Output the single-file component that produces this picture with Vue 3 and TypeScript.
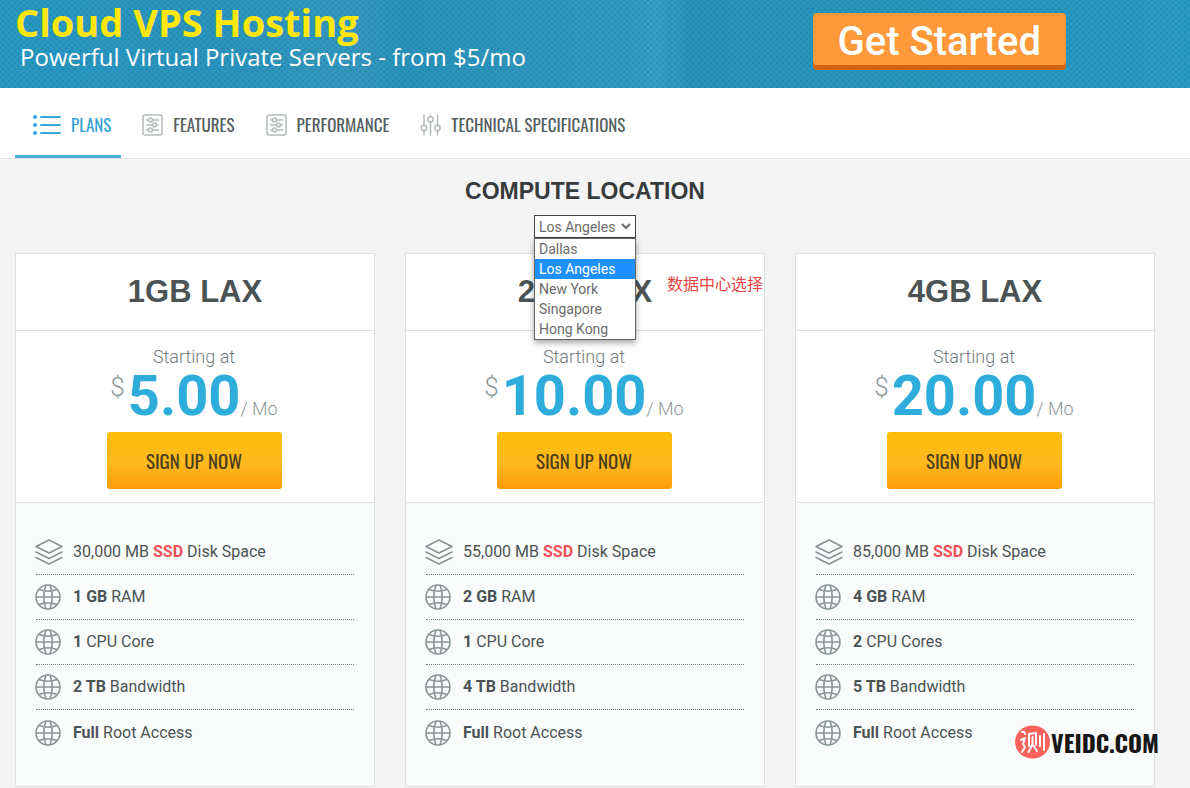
<script setup lang="ts">
import { ref } from 'vue'

interface Plan {
  name: string
  price: string
  disk: string
  features: { strong: string; text: string }[]
}

const makePlan = (name: string, price: string, disk: string, ram: string, cpu: string, cpuText: string, bw: string): Plan => ({
  name,
  price,
  disk,
  features: [
    { strong: ram, text: 'RAM' },
    { strong: cpu, text: cpuText },
    { strong: bw, text: 'Bandwidth' },
    { strong: 'Full', text: 'Root Access' },
  ],
})

const plans: Plan[] = [
  makePlan('1GB LAX', '5.00', '30,000', '1 GB', '1', 'CPU Core', '2 TB'),
  makePlan('2GB LAX', '10.00', '55,000', '2 GB', '1', 'CPU Core', '4 TB'),
  makePlan('4GB LAX', '20.00', '85,000', '4 GB', '2', 'CPU Cores', '5 TB'),
]

const tabs = [
  { label: 'Plans', icon: 'list' },
  { label: 'Features', icon: 'panel' },
  { label: 'Performance', icon: 'panel' },
  { label: 'Technical Specifications', icon: 'sliders' },
]

const locations = ['Dallas', 'Los Angeles', 'New York', 'Singapore', 'Hong Kong']
const location = ref('Los Angeles')
</script>

<template>
  <div class="page">
    <header class="banner">
      <div class="banner-text">
        <h1>Cloud VPS Hosting</h1>
        <p>Powerful Virtual Private Servers - from $5/mo</p>
      </div>
      <button class="get-started" type="button">Get Started</button>
    </header>

    <nav class="tabs">
      <a v-for="(tab, i) in tabs" :key="tab.label" href="#" class="tab" :class="{ active: i === 0 }">
        <svg v-if="tab.icon === 'list'" class="icon-list" width="28" height="20" viewBox="0 0 28 20" fill="none" stroke="currentColor" stroke-width="2" stroke-linecap="round">
          <path d="M8 2h19M8 10h19M8 18h19" />
          <g fill="currentColor" stroke="none"><circle cx="2" cy="2" r="2" /><circle cx="2" cy="10" r="2" /><circle cx="2" cy="18" r="2" /></g>
        </svg>
        <svg v-else-if="tab.icon === 'panel'" width="21" height="22" viewBox="0 0 21 22" fill="none" stroke="currentColor" stroke-width="1.5">
          <rect x="1" y="1" width="19" height="20" rx="2" />
          <path d="M4 6h2.5M10.500 6H17M4 11h6.500M14.500 11H17M4 16h2.500M10.500 16H17" />
          <circle cx="8.500" cy="6" r="1.900" /><circle cx="12.500" cy="11" r="1.900" /><circle cx="8.500" cy="16" r="1.900" />
        </svg>
        <svg v-else width="21" height="22" viewBox="0 0 21 22" fill="none" stroke="currentColor" stroke-width="1.500" stroke-linecap="round">
          <path d="M4 1v10M4 17v4M10.500 1v1.500M10.500 8.500V21M17.500 1v10M17.500 17v4" />
          <circle cx="4" cy="14" r="2.700" /><circle cx="10.500" cy="5.500" r="2.700" /><circle cx="17.500" cy="14" r="2.700" />
        </svg>
        <span>{{ tab.label }}</span>
      </a>
    </nav>

    <main>
      <section class="location">
        <h2><label for="location">Compute Location</label></h2>
        <div class="picker">
          <select id="location" v-model="location">
            <option v-for="l in locations" :key="l">{{ l }}</option>
          </select>
          <svg class="chevron" width="10" height="7" viewBox="0 0 10 7" fill="none" stroke="currentColor" stroke-width="2"><path d="M1 1l4 4 4-4" /></svg>
          <ul class="menu" role="listbox" aria-label="Compute Location">
            <li v-for="l in locations" :key="l" role="option" :aria-selected="l === location" :class="{ selected: l === location }" @click="location = l">{{ l }}</li>
          </ul>
        </div>
      </section>

      <section class="plans">
        <article v-for="(plan, i) in plans" :key="plan.name" class="card">
          <h3>{{ plan.name }}</h3>
          <span v-if="i === 1" class="note">数据中心选择</span>
          <div class="pricing">
            <p class="starting">Starting at</p>
            <p class="price"><span class="currency">$</span><strong>{{ plan.price }}</strong><span class="period">/ Mo</span></p>
            <button type="button" class="signup">SIGN UP NOW</button>
          </div>
          <ul class="features">
            <li>
              <svg width="28" height="26" viewBox="0 0 28 26" fill="none" stroke="currentColor" stroke-width="1.600" stroke-linejoin="round" stroke-linecap="round">
                <path d="M14 1l13 6.500L14 14 1 7.500zM1 13l13 6.500L27 13M1 18.500L14 25l13-6.500" />
              </svg>
              <span>{{ plan.disk }} MB <b class="ssd">SSD</b> Disk Space</span>
            </li>
            <li v-for="f in plan.features" :key="f.text">
              <svg width="28" height="26" viewBox="0 0 28 26" fill="none" stroke="currentColor" stroke-width="1.600">
                <circle cx="13" cy="13" r="12" />
                <path d="M1 13h24M4 5.500q9 3.500 18 0M4 20.500q9-3.500 18 0M11 1q-4.500 12 0 24M15 1q4.500 12 0 24" />
              </svg>
              <span><b>{{ f.strong }}</b> {{ f.text }}</span>
            </li>
          </ul>
          <div v-if="i === 2" class="watermark">
            <svg width="35" height="34" viewBox="0 0 35 34" fill="none" stroke="#fff" stroke-width="2" stroke-linecap="round" stroke-linejoin="round">
              <ellipse cx="17.500" cy="17" rx="17.500" ry="16.500" fill="#fb625c" stroke="none" />
              <path d="M7 7q3-1 3 2M6 15l4-2-2 6 2 3-3 5M14 21V9l7-1v12M17.500 12v7l-4 8M18 20l4 6M25 11v10M29 9v16" />
            </svg>
            <span>VEIDC.COM</span>
          </div>
        </article>
      </section>
    </main>
  </div>
</template>

<style>
body {
  margin: 0;
  background: #f4f4f4;
}
</style>

<style scoped>
* {
  box-sizing: border-box;
}

h1, h2, h3, p, ul {
  margin: 0;
  padding: 0;
  list-style: none;
}

.page {
  font-family: Roboto, "Liberation Sans", sans-serif;
  color: #4b5355;
}

.banner {
  display: flex;
  justify-content: space-between;
  height: 88px;
  padding: 0 124px 0 15px;
  background:
    radial-gradient(circle, rgba(0, 75, 120, 0.16) 1px, transparent 2px) 0 0 / 6px 6px,
    radial-gradient(circle, rgba(0, 75, 120, 0.16) 1px, transparent 2px) 3px 3px / 6px 6px,
    linear-gradient(90deg, #2a9ac4 0%, #2c96be 18%, #3699bf 30%, #2b94bb 34%, #329abf 52%, #3aa0c6 55%, #2a95bc 58%, #2a9bc7 100%);
}

.banner-text {
  font-family: "Noto Sans", "Open Sans", sans-serif;
  white-space: nowrap;
}

.banner h1 {
  font-family: "Open Sans", "Noto Sans", sans-serif;
  font-size: 38px;
  line-height: 44px;
  color: #ffe70d;
}

.banner p {
  padding-left: 5px;
  font-family: "Open Sans", "Noto Sans", sans-serif;
  font-size: 24px;
  line-height: 26px;
  color: #fff;
}

.get-started {
  height: 57px;
  margin-top: 13px;
  padding: 0 25px;
  border: 0;
  border-radius: 4px;
  background: #ff993a;
  box-shadow: inset 0 -5px #d0650c;
  color: #fff;
  font: 500 40px/54px Roboto, sans-serif;
  white-space: nowrap;
}

.tabs {
  display: flex;
  gap: 10px;
  height: 71px;
  padding: 0 15px;
  border-bottom: 1px solid #e2e4e4;
  background: #fff;
}

.tab {
  display: flex;
  align-items: center;
  gap: 10px;
  padding: 6px 10px 0 11px;
  border-bottom: 3px solid transparent;
  color: #b4babb;
  font: 17px/24px Oswald, "Roboto Condensed", "Liberation Sans Narrow", "Liberation Sans", sans-serif;
  text-decoration: none;
  text-transform: uppercase;
  white-space: nowrap;
}

.tab span {
  color: #555e60;
}

.tab.active {
  padding-left: 18px;
  border-color: #4bb2d6;
  color: #36a9cf;
}

.tab.active span {
  color: #36a3d3;
}

main {
  padding: 16px 35px 2px 15px;
}

.location {
  display: flex;
  flex-direction: column;
  align-items: center;
}

h2 {
  font-family: "Liberation Sans", Arial, sans-serif;
  font-size: 23px;
  line-height: 32px;
  color: #383b3c;
  text-transform: uppercase;
}

.picker {
  position: relative;
  width: 102px;
  margin-top: 8px;
  color: #6b6b6b;
}

select {
  display: block;
  width: 100%;
  height: 23px;
  padding: 0 4px;
  border: 1px solid #444;
  border-radius: 0;
  appearance: none;
  background: #fff;
  color: #6b6b6b;
  font: 14px/20px Roboto, sans-serif;
}

.chevron {
  position: absolute;
  top: 8px;
  right: 5px;
  pointer-events: none;
}

.menu {
  position: absolute;
  z-index: 2;
  top: 100%;
  left: 0;
  width: 100%;
  border: 1px solid #666;
  background: #fff;
  box-shadow: 0 3px 6px rgba(0, 0, 0, 0.35);
  font-size: 14px;
  line-height: 20px;
}

.menu li {
  padding: 0 4px;
}

.menu .selected {
  background: #1e90ff;
  color: #fff;
}

.plans {
  display: grid;
  grid-template-columns: repeat(3, 1fr);
  gap: 30px;
  margin-top: 15px;
}

.card {
  position: relative;
  border: 1px solid #dce1e3;
  background: #fff;
}

h3 {
  padding: 18px 0;
  border-bottom: 1px solid #dce1e3;
  font-family: "Liberation Sans", Arial, sans-serif;
  font-size: 31px;
  line-height: 40px;
  text-align: center;
}

.note {
  position: absolute;
  top: 17px;
  right: 1px;
  color: #e84444;
  font: 16px/24px "Noto Sans CJK SC", sans-serif;
}

.pricing {
  display: flex;
  flex-direction: column;
  align-items: center;
  padding: 14px 2px 13px 0;
  border-bottom: 1px solid #dce1e3;
}

.starting {
  font-size: 18px;
  font-weight: 300;
  line-height: 24px;
  color: #707a7d;
}

.price {
  display: flex;
  align-items: baseline;
  height: 56px;
  margin-bottom: 7px;
  line-height: 54px;
  color: #8b9699;
  font-weight: 300;
}

.price strong {
  padding-left: 3px;
  font-size: 56px;
  font-weight: 700;
  color: #2eaddc;
}

.currency {
  align-self: flex-start;
  font-size: 26px;
  line-height: 36px;
}

.period {
  font-size: 18px;
}

.signup {
  width: 175px;
  height: 57px;
  padding: 0 0 2px;
  border: 0;
  border-radius: 3px;
  background: linear-gradient(#ffbd08, #ffb91f 55%, #ff9b08);
  color: #4b3d1c;
  font: 19px/28px Oswald, "Roboto Condensed", "Liberation Sans Narrow", "Liberation Sans", sans-serif;
}

.features {
  padding: 26px 20px 31px;
  background: #fafcfb;
}

.features li {
  display: flex;
  align-items: center;
  gap: 10px;
  height: 45px;
  border-bottom: 1px dotted #7b8182;
  font-size: 16px;
  line-height: 24px;
}

.features li:first-child {
  height: 46px;
}

.features li:last-child {
  border-bottom: 0;
}

.features svg {
  flex: none;
  margin-left: -1px;
  color: #899396;
}

.ssd {
  color: #f04e58;
}

.watermark {
  position: absolute;
  right: -5px;
  bottom: 27px;
  display: flex;
  align-items: center;
  gap: 1px;
  color: #171717;
  font: 700 24px/34px Oswald, "Liberation Serif", serif;
}
</style>
